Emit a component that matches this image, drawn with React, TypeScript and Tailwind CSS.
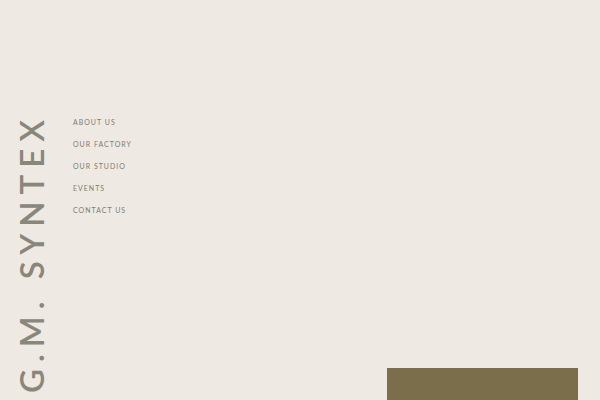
import React from 'react';

const links = [
  { label: 'About Us', href: '#about' },
  { label: 'Our Factory', href: '#factory' },
  { label: 'Our Studio', href: '#studio' },
  { label: 'Events', href: '#events' },
  { label: 'Contact Us', href: '#contact' }
];

const App: React.FC = () => {
  return (
    <div className="flex min-h-screen items-start bg-[#eee9e2] font-['Lato',sans-serif] text-[#89867c]">
      {/* Vertical wordmark */}
      <header className="pt-[113px] pl-[15px]">
        <a
          href="#home"
          className="block rotate-180 whitespace-nowrap text-[33px] leading-8 font-semibold tracking-[7px] [writing-mode:vertical-rl]"
        >
          G.M. SYNTEX
        </a>
      </header>

      {/* Main menu */}
      <nav aria-label="Main" className="pt-[111px] pl-[26px]">
        <ul>
          {links.map(({ label, href }) => (
            <li key={label} className="h-[22px]">
              <a href={href} className="block whitespace-nowrap text-[7px] leading-[22px] tracking-[1px] text-[#7f7c73] uppercase">
                {label}
              </a>
            </li>
          ))}
        </ul>
      </nav>

      {/* Feature panel */}
      <main className="flex flex-1 justify-end pt-92 pr-[22px]">
        <section aria-label="Feature" className="h-8 w-[191px] bg-[#7b6e4b]" />
      </main>
    </div>
  );
};

export default App;
